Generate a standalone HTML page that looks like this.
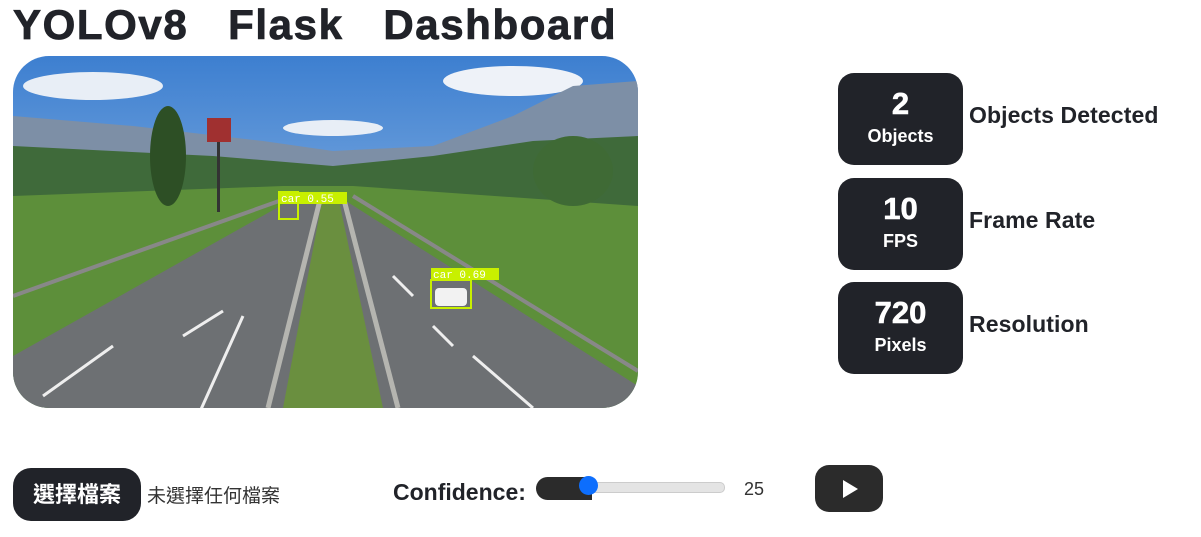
<!DOCTYPE html>
<html><head><meta charset="utf-8"><style>
body{margin:0;width:1201px;height:537px;background:#fff;font-family:"Liberation Sans","Noto Sans CJK TC",sans-serif;color:#212329;position:relative;overflow:hidden}
.a{position:absolute}
h1{position:absolute;left:13px;top:1px;margin:0;font-size:42px;font-weight:bold;white-space:pre;letter-spacing:1.6px;-webkit-text-stroke:0.8px #212329}
.box{position:absolute;left:838px;width:125px;height:92px;background:#212329;border-radius:16px;color:#fff;text-align:center;font-weight:bold}
.box .n{font-size:31px;margin-top:14px;line-height:34px;-webkit-text-stroke:0.6px #fff}
.box .l{font-size:18px;margin-top:5px}
.lab{position:absolute;left:969px;font-size:23px;font-weight:bold;letter-spacing:0.1px}
</style></head><body>
<h1>YOLOv8   Flask   Dashboard</h1>
<svg class="a" style="left:13px;top:56px" width="625" height="352" viewBox="0 0 625 352">
<defs><clipPath id="c"><rect width="625" height="352" rx="36"/></clipPath>
<linearGradient id="s" x1="0" y1="0" x2="0" y2="1"><stop offset="0" stop-color="#3d7fd0"/><stop offset="1" stop-color="#b8d3ee"/></linearGradient></defs>
<g clip-path="url(#c)">
<rect width="625" height="352" fill="url(#s)"/>
<ellipse cx="80" cy="30" rx="70" ry="14" fill="#e8eef6"/><ellipse cx="500" cy="25" rx="70" ry="15" fill="#eef2f8"/><ellipse cx="320" cy="72" rx="50" ry="8" fill="#e8eef6"/>
<path d="M0 60 L120 70 L250 85 L320 95 L420 90 L500 60 L560 30 L625 25 L625 140 L0 140Z" fill="#7d8fa6"/>
<path d="M0 90 L200 100 L320 110 L420 100 L520 85 L625 80 L625 170 L0 170Z" fill="#3f6a3a"/>
<path d="M0 140 L270 130 L340 130 L625 150 L625 352 L0 352Z" fill="#5d8f3a"/>
<path d="M0 300 L285 140 L325 140 L625 330 L625 352 L0 352Z" fill="#6d7073"/>
<path d="M270 352 L310 140 L325 140 L370 352Z" fill="#6a8f3f"/>
<path d="M255 352 L308 140 M385 352 L330 140" stroke="#b5b5b0" stroke-width="5"/>
<path d="M30 340 L100 290 M170 280 L210 255 M185 360 L230 260 M460 300 L520 352 M420 270 L440 290 M380 220 L400 240" stroke="#eee" stroke-width="3"/>
<path d="M0 240 L280 140" stroke="#888" stroke-width="4"/><path d="M625 315 L340 140" stroke="#888" stroke-width="4"/>
<rect x="266" y="136" width="19" height="27" fill="none" stroke="#c8f000" stroke-width="2"/><rect x="266" y="136" width="68" height="12" fill="#c8f000"/>
<text x="268" y="146" fill="#fff" font-size="11" font-family="Liberation Mono">car 0.55</text>
<rect x="418" y="224" width="40" height="28" fill="none" stroke="#c8f000" stroke-width="2"/><rect x="418" y="212" width="68" height="12" fill="#c8f000"/>
<text x="420" y="222" fill="#fff" font-size="11" font-family="Liberation Mono">car 0.69</text>
<rect x="422" y="232" width="32" height="18" rx="4" fill="#f2f2f2"/>
<rect x="194" y="62" width="24" height="24" fill="#a03030"/><rect x="204" y="86" width="3" height="70" fill="#333"/>
<ellipse cx="155" cy="100" rx="18" ry="50" fill="#2d4f25"/><ellipse cx="560" cy="115" rx="40" ry="35" fill="#3f6a35"/>
</g></svg>
<div class="box" style="top:73px"><div class="n">2</div><div class="l">Objects</div></div>
<div class="box" style="top:178px"><div class="n">10</div><div class="l">FPS</div></div>
<div class="box" style="top:282px"><div class="n">720</div><div class="l">Pixels</div></div>
<div class="lab" style="top:102px">Objects Detected</div>
<div class="lab" style="top:207px">Frame Rate</div>
<div class="lab" style="top:311px">Resolution</div>
<div class="a" style="left:13px;top:468px;width:128px;height:53px;background:#212329;border-radius:18px;color:#fff;font-size:22px;font-weight:bold;text-align:center;line-height:53px">選擇檔案</div>
<div class="a" style="left:147px;top:481px;font-size:19px;color:#333">未選擇任何檔案</div>
<div class="a" style="left:393px;top:479px;font-size:23px;font-weight:bold">Confidence:</div>
<div class="a" style="left:536px;top:477px;width:56px;height:23px;background:#2b2b2b;border-radius:12px 0 0 12px"></div>
<div class="a" style="left:588px;top:482px;width:135px;height:9px;background:#e4e4e4;border:1px solid #ccc;border-radius:5px"></div>
<div class="a" style="left:579px;top:476px;width:19px;height:19px;background:#0d6efd;border-radius:50%"></div>
<div class="a" style="left:744px;top:479px;font-size:18px;color:#333">25</div>
<div class="a" style="left:815px;top:465px;width:68px;height:47px;background:#2b2b2b;border-radius:14px"></div>
<svg class="a" style="left:840px;top:479px" width="20" height="20"><path d="M3 1 L18 10 L3 19Z" fill="#fff"/></svg>
</body></html>
